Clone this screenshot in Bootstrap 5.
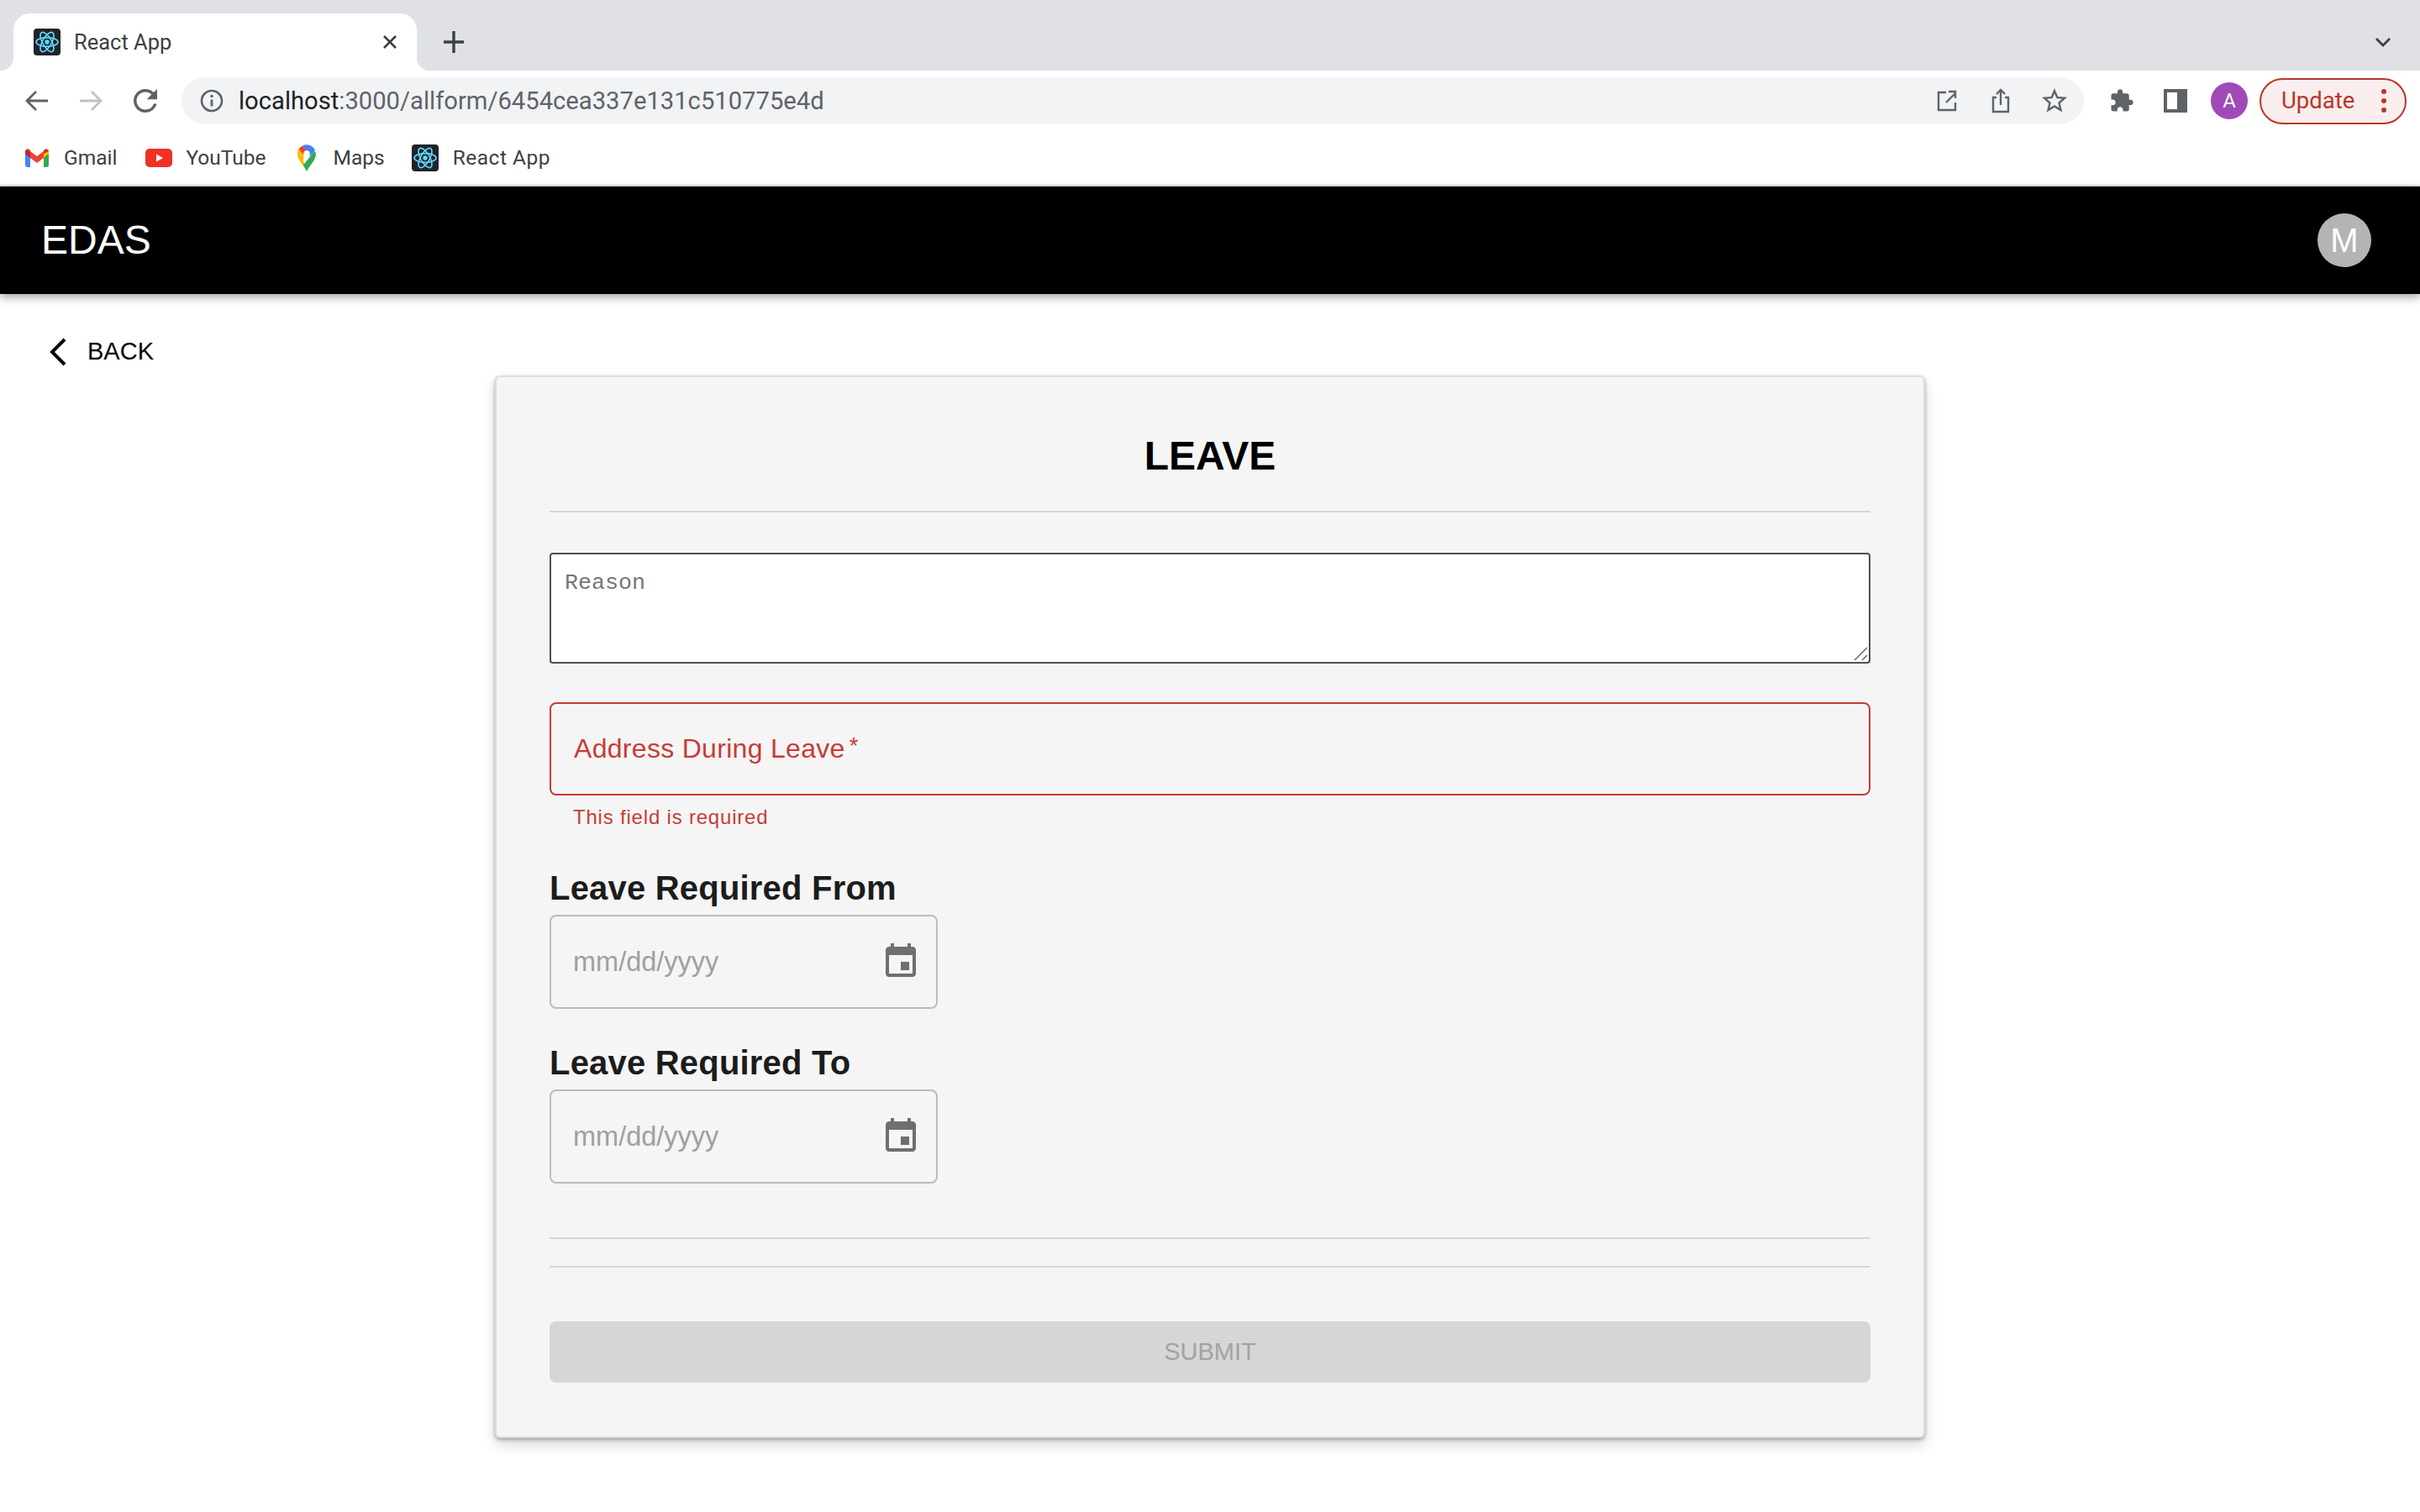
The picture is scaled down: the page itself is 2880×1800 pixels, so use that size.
<!DOCTYPE html>
<html lang="en">
<head>
  <meta charset="UTF-8" />
  <meta name="viewport" content="width=device-width, initial-scale=1" />
  <title>React App</title>
  <link href="https://cdn.jsdelivr.net/npm/bootstrap@5.3.0/dist/css/bootstrap.min.css" rel="stylesheet" />
  <style>
    html, body { height: 100%; }
    body { background: #fff; font-family: "Liberation Sans", Arial, sans-serif; overflow: hidden; }

    /* browser chrome */
    .ui-font { font-family: Roboto, "Liberation Sans", sans-serif; }
    .tab-strip { height: 84px; background: #dfe1e5; padding: 16px 0 0 16px; }
    .browser-tab { width: 480px; height: 68px; background: #fff; border-radius: 20px 20px 0 0; padding: 0 24px; color: #3c4043; font-size: 25.5px; position: relative; }
    .browser-tab::before, .browser-tab::after { content: ""; position: absolute; bottom: 0; width: 16px; height: 16px; }
    .browser-tab::before { left: -16px; background: radial-gradient(circle at 0 0, #dfe1e5 16px, #fff 16.5px); }
    .browser-tab::after { right: -16px; background: radial-gradient(circle at 100% 0, #dfe1e5 16px, #fff 16.5px); }
    .tab-close { margin-left: auto; margin-right: -2px; }
    .new-tab { margin: 18px 0 0 30px; }
    .strip-chevron { margin: 28px 34px 0 auto; }
    .tool-row { height: 72px; }
    .nav-btns { width: 216px; padding-left: 30px; gap: 38px; }
    .reload-icon { margin-left: -8px; }
    .omnibox { width: 2264px; height: 56px; background: #f1f3f4; border-radius: 28px; padding: 0 17px 0 22px; }
    .url-text { font-size: 29.2px; color: #5f6368; margin-left: 18px; padding-top: 1px; }
    .url-host { color: #202124; }
    .omni-right { margin-left: auto; gap: 41px; }
    .star-icon { margin-left: -6px; }
    .tool-right { padding-left: 30px; }
    .panel-icon { margin-left: 11px; }
    .mini-avatar { width: 44px; height: 44px; background: #a04ab8; color: #fff; font-size: 24px; margin: 0 14px 0 28px; }
    .update-pill { width: 175px; height: 55px; border: 2px solid #b9352b; border-radius: 28px; background: #f9eeed; color: #b9352b; font-size: 27.5px; padding: 0 21px 0 24px; }
    .update-dots { margin-left: auto; }
    .bookmark-row { height: 66px; padding-left: 30px; color: #3c4043; font-size: 24.5px; border-bottom: 2px solid #e3e3e3; }
    .bm-item { gap: 17px; }
    .bm-gmail { gap: 18px; margin-right: 34px; }
    .bm-youtube { gap: 16px; margin-right: 33px; }
    .bm-maps { gap: 21px; margin-right: 32px; }
    .bm-react span { letter-spacing: .5px; }

    /* app */
    .app-bar { height: 128px; background: #000; color: #fff; padding: 0 58px 0 49px; box-shadow: 0 4px 10px rgba(0,0,0,.35); position: relative; }
    .app-brand { font-size: 48px; line-height: 1; }
    .user-avatar { width: 64px; height: 64px; background: #b4b4b4; color: #fff; font-size: 40px; }
    .back-row { height: 97px; padding: 41px 0 0 58px; font-size: 29px; color: #000; gap: 24px; text-decoration: none; }
    .leave-card { width: 1702px; height: 1265px; margin: 0 auto; background: #f5f5f5; border: 2px solid #dcdcdc; border-top-color: #e0e0e0; border-radius: 6px; padding: 0 63px; box-shadow: 0 2px 4px rgba(0,0,0,.3), 0 8px 16px rgba(0,0,0,.15); }
    .leave-title { font-size: 48px; font-weight: 700; line-height: 60px; text-align: center; color: #000; margin: 64px 0 35px; }
    .soft-rule { height: 2px; margin: 0; background: #d6d6d6; opacity: 1; border: 0; }
    .reason-wrap { margin-top: 48px; }
    .reason-box { display: block; width: 100%; height: 132px; padding: 18px 16px 16px; background: #fff; border: 2px solid #505050; border-radius: 4px; font-family: "Liberation Mono", "Courier New", monospace; font-size: 26.67px; line-height: 1.2; resize: none; }
    .reason-box::placeholder { color: #767676; }
    .reason-grip { position: absolute; right: 2px; bottom: 2px; }
    .address-box { height: 111px; margin-top: 46px; border: 2px solid #c73c36; border-radius: 8px; padding: 0 27px 2px; color: #c73c36; font-size: 32px; letter-spacing: .3px; }
    .address-star { font-size: 27px; margin: -4px 0 0 5px; }
    .field-help { color: #c73c36; font-size: 24px; letter-spacing: .8px; line-height: 28px; margin: 12px 0 0 28px; }
    .date-label { font-size: 40px; font-weight: 700; letter-spacing: .2px; line-height: 48px; color: #1c1c1c; margin: 0; }
    .from-label { margin-top: 46px; }
    .to-label { margin-top: 40px; }
    .date-box { width: 462px; height: 112px; margin-top: 8px; border: 2px solid #bcbcbc; border-radius: 8px; padding: 0 18px 0 26px; color: #a0a0a0; font-size: 32.5px; }
    .date-icon { margin: 0 0 0 auto; }
    .rule-first { margin-top: 64px; }
    .rule-second { margin-top: 32px; }
    .submit-btn { height: 73px; margin-top: 64px; background: #d6d6d6 !important; border: 0; border-radius: 8px; color: #a3a3a3 !important; font-size: 29px; opacity: 1 !important; }
  </style>
</head>
<body>
  <div class="ui-font">
    <div class="tab-strip d-flex align-items-start">
      <div class="browser-tab d-flex align-items-center">
        <svg width="32" height="32" viewBox="0 0 32 32" class="me-3"><rect width="32" height="32" rx="4" fill="#20232a"/><g fill="none" stroke="#61dafb" stroke-width="1.6"><ellipse cx="16" cy="16" rx="13" ry="5.4"/><ellipse cx="16" cy="16" rx="13" ry="5.4" transform="rotate(60 16 16)"/><ellipse cx="16" cy="16" rx="13" ry="5.4" transform="rotate(120 16 16)"/></g><circle cx="16" cy="16" r="2.7" fill="#61dafb"/></svg>
        <span>React App</span>
        <svg class="tab-close" width="20" height="20" viewBox="0 0 20 20"><path d="M3 3l14 14M17 3L3 17" stroke="#3c4043" stroke-width="2.6" fill="none"/></svg>
      </div>
      <svg class="new-tab" width="28" height="32" viewBox="0 0 28 32"><path d="M14 3v26M2 16h24" stroke="#3c4043" stroke-width="3.4" fill="none"/></svg>
      <svg class="strip-chevron" width="20" height="12" viewBox="0 0 20 12"><path d="M2 2l8 8 8-8" stroke="#3c4043" stroke-width="2.8" fill="none"/></svg>
    </div>

    <div class="tool-row d-flex align-items-center">
      <div class="nav-btns d-flex align-items-center">
        <svg width="27" height="26" viewBox="0 0 27 26"><path d="M13 2L2 13l11 11M2 13h25" stroke="#5f6368" stroke-width="2.8" fill="none"/></svg>
        <svg width="27" height="26" viewBox="0 0 27 26"><path d="M14 2l11 11-11 11M25 13H0" stroke="#bdc1c6" stroke-width="2.8" fill="none"/></svg>
        <svg class="reload-icon" width="42" height="42" viewBox="0 0 24 24"><path fill="#5f6368" d="M17.65 6.35A7.958 7.958 0 0 0 12 4c-4.42 0-7.99 3.58-7.99 8s3.57 8 7.99 8c3.73 0 6.84-2.55 7.73-6h-2.08A5.99 5.99 0 0 1 12 18c-3.31 0-6-2.69-6-6s2.69-6 6-6c1.66 0 3.14.69 4.22 1.78L13 11h7V4l-2.35 2.35z"/></svg>
      </div>
      <div class="omnibox d-flex align-items-center">
        <svg width="28" height="28" viewBox="0 0 28 28"><circle cx="14" cy="14" r="12" fill="none" stroke="#5f6368" stroke-width="2.6"/><path d="M14 12.5v8" stroke="#5f6368" stroke-width="2.8"/><circle cx="14" cy="8.5" r="1.8" fill="#5f6368"/></svg>
        <span class="url-text"><span class="url-host">localhost</span>:3000/allform/6454cea337e131c510775e4d</span>
        <div class="omni-right d-flex align-items-center">
          <svg width="24" height="26" viewBox="0 0 24 26"><path d="M11 3H2v21h20v-9M11 15L22 4M14 2h8v8" stroke="#5f6368" stroke-width="2.4" fill="none"/></svg>
          <svg width="22" height="30" viewBox="0 0 22 30"><path d="M6 11H2v17h18V11h-4M11 20V2M6 7l5-5 5 5" stroke="#5f6368" stroke-width="2.4" fill="none"/></svg>
          <svg class="star-icon" width="36" height="36" viewBox="0 0 24 24"><path fill="#5f6368" d="M22 9.24l-7.19-.62L12 2 9.19 8.63 2 9.24l5.46 4.73L5.82 21 12 17.27 18.18 21l-1.63-7.03L22 9.24zM12 15.4l-3.76 2.27 1-4.28-3.32-2.88 4.38-.38L12 6.1l1.71 4.04 4.38.38-3.32 2.88 1 4.28L12 15.4z"/></svg>
        </div>
      </div>
      <div class="tool-right d-flex align-items-center">
        <svg width="30" height="30" viewBox="0 0 24 24" class="me-4"><path fill="#5f6368" d="M20.5 11H19V7c0-1.1-.9-2-2-2h-4V3.5C13 2.12 11.88 1 10.5 1S8 2.12 8 3.5V5H4c-1.1 0-1.99.9-1.99 2v3.8H3.5c1.49 0 2.7 1.21 2.7 2.7s-1.21 2.7-2.7 2.7H2V20c0 1.1.9 2 2 2h3.8v-1.5c0-1.49 1.21-2.7 2.7-2.7 1.49 0 2.7 1.21 2.7 2.7V22H17c1.1 0 2-.9 2-2v-4h1.5c1.38 0 2.5-1.12 2.5-2.5S21.88 11 20.5 11z"/></svg>
        <svg class="panel-icon" width="28" height="28" viewBox="0 0 28 28"><path fill="#5f6368" fill-rule="evenodd" d="M0 0h28v28H0zM4 4v20h12V4z"/></svg>
        <span class="mini-avatar rounded-circle d-flex align-items-center justify-content-center">A</span>
        <div class="update-pill d-flex align-items-center">
          <span>Update</span>
          <svg class="update-dots" width="8" height="30" viewBox="0 0 8 30"><circle cx="4" cy="4" r="3" fill="#b9352b"/><circle cx="4" cy="15" r="3" fill="#b9352b"/><circle cx="4" cy="26" r="3" fill="#b9352b"/></svg>
        </div>
      </div>
    </div>

    <div class="bookmark-row d-flex align-items-center">
      <div class="bm-item bm-gmail d-flex align-items-center">
        <svg width="28" height="22" viewBox="0 0 28 22"><path d="M0 6v13a3 3 0 0 0 3 3h3V8z" fill="#4285f4"/><path d="M22 8v14h3a3 3 0 0 0 3-3V6z" fill="#34a853"/><path d="M0 3v3l6 5V3z" fill="#c5221f"/><path d="M22 3v8l6-5V3z" fill="#fbbc04"/><path d="M6 3v8l8 6 8-6V3l-8 6z" fill="#ea4335"/><path d="M0 3a3 3 0 0 1 5-2l1 1v4zM28 3a3 3 0 0 0-5-2l-1 1v4z" fill="#c5221f" opacity=".9"/></svg>
        <span>Gmail</span>
      </div>
      <div class="bm-item bm-youtube d-flex align-items-center">
        <svg width="32" height="22" viewBox="0 0 32 22"><rect width="32" height="22" rx="5" fill="#ee3124"/><path d="M13 6.5l8 4.5-8 4.5z" fill="#fff"/></svg>
        <span>YouTube</span>
      </div>
      <div class="bm-item bm-maps d-flex align-items-center">
        <svg width="22" height="32" viewBox="0 0 22 32" class="ms-1"><path d="M11 32C8 25 0 19 0 11c0-2 .6-4 1.6-5.5L8 10.5 7 19z" fill="#fbbc04"/><path d="M11 32c-1-2.500-2.500-5-4-7.500L20 8c1.300 1 2 2 2 3 0 8-8 14-11 21z" fill="#34a853"/><path d="M1.600 5.500A11 11 0 0 1 6 1.500l5 5-4 5.500z" fill="#ea4335"/><path d="M6 1.500A11 11 0 0 1 21 7l-6 7-4-7.500z" fill="#4285f4"/><circle cx="11" cy="11" r="3.800" fill="#fff"/></svg>
        <span>Maps</span>
      </div>
      <div class="bm-item bm-react d-flex align-items-center">
        <svg width="32" height="32" viewBox="0 0 32 32"><rect width="32" height="32" rx="4" fill="#20232a"/><g fill="none" stroke="#61dafb" stroke-width="1.6"><ellipse cx="16" cy="16" rx="13" ry="5.4"/><ellipse cx="16" cy="16" rx="13" ry="5.4" transform="rotate(60 16 16)"/><ellipse cx="16" cy="16" rx="13" ry="5.4" transform="rotate(120 16 16)"/></g><circle cx="16" cy="16" r="2.7" fill="#61dafb"/></svg>
        <span>React App</span>
      </div>
    </div>
  </div>

  <header class="app-bar d-flex align-items-center justify-content-between">
    <span class="app-brand">EDAS</span>
    <span class="user-avatar rounded-circle d-flex align-items-center justify-content-center">M</span>
  </header>

  <main>
    <a class="back-row d-flex align-items-center" href="#">
      <svg width="22" height="34" viewBox="0 0 22 34"><path d="M19 2L4 17l15 15" stroke="#000" stroke-width="4" fill="none"/></svg>
      <span>BACK</span>
    </a>

    <form class="card leave-card">
      <h1 class="leave-title">LEAVE</h1>
      <hr class="soft-rule" />
      <div class="reason-wrap position-relative">
        <textarea class="reason-box" placeholder="Reason"></textarea>
        <svg class="reason-grip" width="18" height="18" viewBox="0 0 18 18"><path d="M1 16L16 1M10 16l6-6" stroke="#6e6e6e" stroke-width="1.6" fill="none"/></svg>
      </div>
      <div class="address-box d-flex align-items-center">
        <span>Address During Leave</span><span class="address-star">*</span>
      </div>
      <p class="field-help">This field is required</p>
      <p class="date-label from-label">Leave Required From</p>
      <div class="date-box d-flex align-items-center">
        <span>mm/dd/yyyy</span>
        <svg class="date-icon" width="48" height="48" viewBox="0 0 24 24"><path fill="#6f6f6f" d="M17 12h-5v5h5v-5zM16 1v2H8V1H6v2H5c-1.110 0-1.990.9-1.990 2L3 19c0 1.100.89 2 2 2h14c1.100 0 2-.9 2-2V5c0-1.100-.9-2-2-2h-1V1h-2zm3 18H5V8h14v11z"/></svg>
      </div>
      <p class="date-label to-label">Leave Required To</p>
      <div class="date-box d-flex align-items-center">
        <span>mm/dd/yyyy</span>
        <svg class="date-icon" width="48" height="48" viewBox="0 0 24 24"><path fill="#6f6f6f" d="M17 12h-5v5h5v-5zM16 1v2H8V1H6v2H5c-1.110 0-1.990.9-1.990 2L3 19c0 1.100.89 2 2 2h14c1.100 0 2-.9 2-2V5c0-1.100-.9-2-2-2h-1V1h-2zm3 18H5V8h14v11z"/></svg>
      </div>
      <hr class="soft-rule rule-first" />
      <hr class="soft-rule rule-second" />
      <button type="button" class="btn submit-btn w-100" disabled>SUBMIT</button>
    </form>
  </main>
</body>
</html>
